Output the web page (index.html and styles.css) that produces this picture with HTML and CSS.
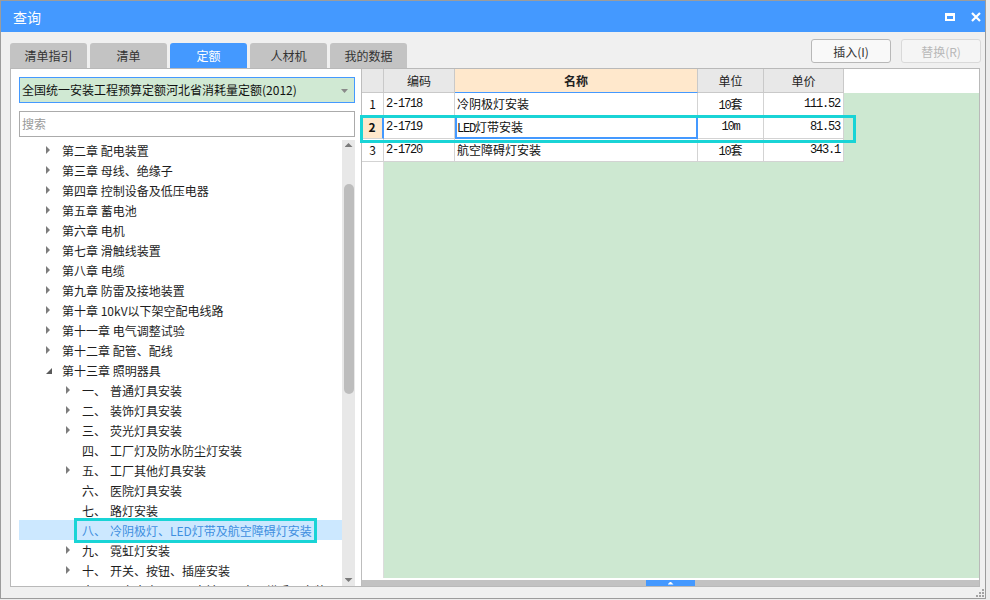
FILE: index.html
```html
<!DOCTYPE html>
<html lang="zh">
<head>
<meta charset="utf-8">
<title>查询</title>
<link rel="stylesheet" href="styles.css">
</head>
<body>
<div class="window">
  <div class="titlebar">
    <span class="title">查询</span>
    <div class="win-btns">
      <span class="max"></span>
      <svg class="close" width="10" height="10" viewBox="0 0 10 10"><path d="M1 1L9 9M9 1L1 9" stroke="#fff" stroke-width="2.2" fill="none"/></svg>
    </div>
  </div>
  <div class="toolbar">
    <div class="tabs">
      <div class="tab">清单指引</div>
      <div class="tab">清单</div>
      <div class="tab active">定额</div>
      <div class="tab">人材机</div>
      <div class="tab">我的数据</div>
    </div>
    <div class="btns">
      <button class="btn">插入(I)</button>
      <button class="btn disabled">替换(R)</button>
    </div>
  </div>
  <div class="content">
    <div class="left">
      <div class="select">全国统一安装工程预算定额河北省消耗量定额(2012)<span class="caret"></span></div>
      <div class="search">搜索</div>
      <div class="tree">
        <div class="tree-rows">
          <div class="node l1"><span class="arrow"><i class="tri-r"></i></span>第二章 配电装置</div>
          <div class="node l1"><span class="arrow"><i class="tri-r"></i></span>第三章 母线、绝缘子</div>
          <div class="node l1"><span class="arrow"><i class="tri-r"></i></span>第四章 控制设备及低压电器</div>
          <div class="node l1"><span class="arrow"><i class="tri-r"></i></span>第五章 蓄电池</div>
          <div class="node l1"><span class="arrow"><i class="tri-r"></i></span>第六章 电机</div>
          <div class="node l1"><span class="arrow"><i class="tri-r"></i></span>第七章 滑触线装置</div>
          <div class="node l1"><span class="arrow"><i class="tri-r"></i></span>第八章 电缆</div>
          <div class="node l1"><span class="arrow"><i class="tri-r"></i></span>第九章 防雷及接地装置</div>
          <div class="node l1"><span class="arrow"><i class="tri-r"></i></span>第十章 10kV以下架空配电线路</div>
          <div class="node l1"><span class="arrow"><i class="tri-r"></i></span>第十一章 电气调整试验</div>
          <div class="node l1"><span class="arrow"><i class="tri-r"></i></span>第十二章 配管、配线</div>
          <div class="node l1"><span class="arrow"><i class="tri-d"></i></span>第十三章 照明器具</div>
          <div class="node l2"><span class="arrow"><i class="tri-r"></i></span><span class="lbl">一、</span>普通灯具安装</div>
          <div class="node l2"><span class="arrow"><i class="tri-r"></i></span><span class="lbl">二、</span>装饰灯具安装</div>
          <div class="node l2"><span class="arrow"><i class="tri-r"></i></span><span class="lbl">三、</span>荧光灯具安装</div>
          <div class="node l2"><span class="arrow"></span><span class="lbl">四、</span>工厂灯及防水防尘灯安装</div>
          <div class="node l2"><span class="arrow"><i class="tri-r"></i></span><span class="lbl">五、</span>工厂其他灯具安装</div>
          <div class="node l2"><span class="arrow"></span><span class="lbl">六、</span>医院灯具安装</div>
          <div class="node l2"><span class="arrow"></span><span class="lbl">七、</span>路灯安装</div>
          <div class="node l2 selected"><span class="arrow"></span><span class="lbl">八、</span>冷阴极灯、LED灯带及航空障碍灯安装<span class="mark tree-mark"></span></div>
          <div class="node l2"><span class="arrow"><i class="tri-r"></i></span><span class="lbl">九、</span>霓虹灯安装</div>
          <div class="node l2"><span class="arrow"><i class="tri-r"></i></span><span class="lbl">十、</span>开关、按钮、插座安装</div>
          <div class="node l2"><span class="arrow"><i class="tri-r"></i></span><span class="lbl wide">十一、</span>安全变压器、电铃、风扇、烘手器安装</div>
        </div>
        <div class="vscroll">
          <span class="up"></span>
          <div class="thumb"></div>
          <div class="spacer"></div>
          <span class="down"></span>
        </div>
      </div>
    </div>
    <div class="grid">
      <div class="ghead">
        <div class="hc w0"></div>
        <div class="hc w1">编码</div>
        <div class="hc w2 focus-col">名称</div>
        <div class="hc w3">单位</div>
        <div class="hc w4">单价</div>
        <div class="hfill"></div>
      </div>
      <div class="gbody">
        <div class="row">
          <div class="cell w0">1</div>
          <div class="cell w1 mono">2-1718</div>
          <div class="cell w2">冷阴极灯安装</div>
          <div class="cell w3"><span class="mono">10</span>套</div>
          <div class="cell w4 mono num">111.52</div>
        </div>
        <div class="row">
          <div class="cell w0 sel">2</div>
          <div class="cell w1 mono">2-1719</div>
          <div class="cell w2 focus"><span class="mono">LED</span>灯带安装</div>
          <div class="cell w3 mono">10m</div>
          <div class="cell w4 mono num">81.53</div>
          <span class="mark grid-mark"></span>
        </div>
        <div class="row">
          <div class="cell w0">3</div>
          <div class="cell w1 mono">2-1720</div>
          <div class="cell w2">航空障碍灯安装</div>
          <div class="cell w3"><span class="mono">10</span>套</div>
          <div class="cell w4 mono num">343.1</div>
        </div>
      </div>
      <div class="gap"></div>
      <div class="hscroll"><div class="hthumb"></div></div>
    </div>
  </div>
  <div class="footer">
    <svg class="grip" width="8" height="8" viewBox="0 0 8 8" fill="#a3a3a3"><rect x="6" y="0" width="2" height="2"/><rect x="3" y="3" width="2" height="2"/><rect x="6" y="3" width="2" height="2"/><rect x="0" y="6" width="2" height="2"/><rect x="3" y="6" width="2" height="2"/><rect x="6" y="6" width="2" height="2"/></svg>
  </div>
</div>
</body>
</html>
```
FILE: styles.css
```css
* { box-sizing: border-box; }
html, body { margin: 0; padding: 0; }
body {
  width: 990px;
  height: 600px;
  background: #ececec;
  font-family: "Noto Sans CJK SC", "Microsoft YaHei", sans-serif;
  font-size: 12px;
  color: #222;
  overflow: hidden;
}
.window {
  width: 986px;
  height: 599px;
  border: 1px solid #9c9c9c;
  background: #f0f0f0;
  display: flex;
  flex-direction: column;
}
.titlebar {
  height: 31px;
  flex: none;
  background: #4499ff;
  color: #fff;
  display: flex;
  align-items: center;
  justify-content: space-between;
  padding: 1px 4px 0 12px;
}
.title { font-size: 14px; }
.win-btns { display: flex; align-items: center; gap: 16px; }
.max {
  width: 10px;
  height: 8px;
  border: 2px solid #fff;
  border-top-width: 3px;
  display: block;
}
.close { display: block; }

.toolbar {
  height: 36px;
  flex: none;
  display: flex;
  justify-content: space-between;
  padding: 0 4px 0 9px;
}
.tabs { display: flex; gap: 3px; align-self: flex-end; }
.tab {
  width: 77px;
  height: 25px;
  line-height: 25px;
  text-align: center;
  font-size: 12px;
  color: #333;
  background: #c3c3c3;
  border-radius: 3px 3px 0 0;
}
.tab.active { background: #4499ff; color: #fff; }
.btns { display: flex; gap: 10px; margin-top: 7px; }
.btn {
  width: 80px;
  height: 24px;
  padding: 0;
  font-family: inherit;
  font-size: 12px;
  color: #333;
  background: #f9f9f9;
  border: 1px solid #b8b8b8;
  border-radius: 3px;
}
.btn.disabled { color: #b8b8b8; border-color: #d9d9d9; background: #f5f5f5; }

.content {
  margin-left: 9px;
  width: 970px;
  height: 519px;
  flex: none;
  border: 1px solid #b9b9b9;
  background: #fff;
  display: flex;
}
.left {
  width: 350px;
  flex: none;
  padding: 8px 0 0 8px;
  display: flex;
  flex-direction: column;
}
.select {
  width: 336px;
  height: 26px;
  flex: none;
  border: 1px solid #4499ff;
  background: #d0e9d3;
  font-size: 12px;
  line-height: 24px;
  padding-left: 2px;
  color: #111;
  position: relative;
}
.caret {
  position: absolute;
  right: 6px;
  top: 11px;
  width: 7px;
  height: 4px;
  background: #8a8a8a;
  clip-path: polygon(0 0, 100% 0, 50% 100%);
}
.search {
  width: 336px;
  height: 26px;
  flex: none;
  margin-top: 8px;
  border: 1px solid #ababab;
  color: #9a9a9a;
  font-size: 12px;
  line-height: 24px;
  padding-left: 2px;
}
.tree {
  width: 336px;
  flex: 1;
  margin-top: 3px;
  display: flex;
  overflow: hidden;
}
.tree-rows { flex: 1; overflow: hidden; }
.node {
  height: 20px;
  display: flex;
  align-items: center;
  white-space: nowrap;
  color: #1e1e1e;
  position: relative;
}
.l1 { padding-left: 27px; }
.l2 { padding-left: 47px; }
.arrow {
  width: 16px;
  flex: none;
  height: 20px;
  display: flex;
  align-items: center;
}
.tri-r {
  display: block;
  width: 4px;
  height: 8px;
  background: #7c7c7c;
  clip-path: polygon(0 0, 100% 50%, 0 100%);
}
.tri-d {
  display: block;
  width: 6px;
  height: 6px;
  margin-top: 2px;
  background: #5a5a5a;
  clip-path: polygon(100% 0, 100% 100%, 0 100%);
}
.lbl { width: 28px; flex: none; }
.lbl.wide { width: 40px; }
.node.selected { background: #cce8ff; color: #3f8fe0; }
.mark { position: absolute; border: 3px solid #19d4d6; pointer-events: none; z-index: 5; }
.tree-mark { left: 55px; top: -2px; width: 243px; height: 25px; }

.vscroll {
  width: 13px;
  flex: none;
  background: #e8e8e8;
  display: flex;
  flex-direction: column;
  align-items: center;
}
.up {
  margin-top: 3px;
  width: 8px;
  height: 4px;
  background: #7a7a7a;
  clip-path: polygon(50% 0, 100% 100%, 0 100%);
}
.thumb {
  margin-top: 37px;
  width: 10px;
  height: 210px;
  border-radius: 5px;
  background: #bdbdbd;
}
.spacer { flex: 1; }
.down {
  margin-bottom: 4px;
  width: 8px;
  height: 4px;
  background: #7a7a7a;
  clip-path: polygon(0 0, 100% 0, 50% 100%);
}

.grid {
  flex: 1;
  border-left: 1px solid #bdbdbd;
  display: flex;
  flex-direction: column;
  min-width: 0;
}
.ghead { display: flex; height: 24px; flex: none; }
.hc {
  height: 24px;
  flex: none;
  border-right: 1px solid #c9c9c9;
  border-bottom: 1px solid #c9c9c9;
  background: #e8e8e8;
  text-align: center;
  line-height: 23px;
  font-size: 12px;
  color: #222;
}
.hc.focus-col { background: #ffe8cc; font-weight: bold; border-bottom-color: #4499ff; }
.hfill { flex: 1; background: #fff; }
.w0 { width: 22px; }
.w1 { width: 71px; }
.w2 { width: 243px; }
.w3 { width: 66px; }
.w4 { width: 80px; }
.gbody {
  flex: 1;
  background: linear-gradient(to right, #fff 0, #fff 21px, #dcdcdc 21px, #dcdcdc 22px, #cde8d1 22px);
}
.row { display: flex; height: 23px; position: relative; }
.cell {
  height: 23px;
  flex: none;
  background: #fff;
  border-right: 1px solid #d3d3d3;
  border-bottom: 1px solid #d3d3d3;
  line-height: 22px;
  font-size: 12px;
  white-space: nowrap;
  color: #111;
}
.cell.w0 { text-align: center; }
.cell.w1 { padding-left: 2px; }
.cell.w2 { padding-left: 2px; }
.cell.w3 { text-align: center; }
.cell.num { text-align: right; padding-right: 3px; }
.mono {
  font-family: "Liberation Mono", "Noto Sans CJK SC", monospace;
  font-size: 12px;
  letter-spacing: -1.2px;
}
.cell.w0.sel { background: #ffe8cc; font-weight: bold; border-right: 2px solid #4499ff; }
.cell.focus { outline: 2px solid #4499ff; outline-offset: -2px; }
.grid-mark { left: -2px; top: -1px; width: 496px; height: 28px; }
.gap { height: 2px; flex: none; background: #fff; }
.hscroll { height: 6px; flex: none; background: #c2c2c2; display: flex; }
.hthumb {
  margin-left: 284px;
  width: 49px;
  height: 6px;
  background: #4499ff;
  display: flex;
  justify-content: center;
  align-items: center;
}
.hthumb::after {
  content: "";
  width: 6px;
  height: 3px;
  background: #fff;
  clip-path: polygon(50% 0, 100% 100%, 0 100%);
}
.footer {
  flex: 1;
  display: flex;
  justify-content: flex-end;
  align-items: flex-end;
  padding: 0 1px 1px 0;
}
.grip { display: block; }
```
